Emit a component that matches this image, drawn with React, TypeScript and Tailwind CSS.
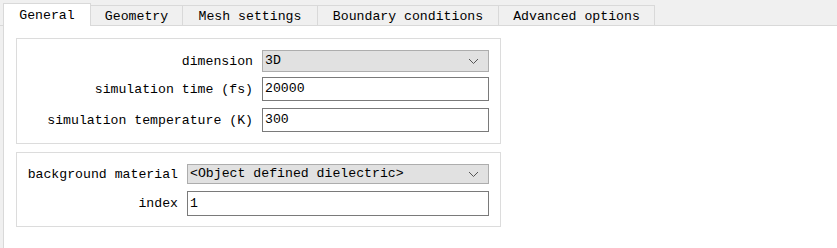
import React from "react";

const tabs = [
  { name: "General", w: "w-[88px]" },
  { name: "Geometry", w: "w-[92px]" },
  { name: "Mesh settings", w: "w-[135px]" },
  { name: "Boundary conditions", w: "w-[181px]" },
  { name: "Advanced options", w: "w-[156px]" },
];

const Chevron = () => (
  <svg width="11" height="7" viewBox="0 0 11 7" className="shrink-0">
    <path d="M1 1 L5.5 5.5 L10 1" fill="none" stroke="#555" strokeWidth="1" />
  </svg>
);

const Combo: React.FC<{ value: string; h: string }> = ({ value, h }) => (
  <div className={`${h} flex items-center justify-between bg-[#e1e1e1] border border-[#adadad] pl-[2px] pr-[9px]`}>
    <span>{value}</span>
    <Chevron />
  </div>
);

const Field: React.FC<{ value: string; h: string }> = ({ value, h }) => (
  <div className={`${h} flex items-center bg-white border border-[#7a7a7a] pl-[2px]`}>{value}</div>
);

const App: React.FC = () => {
  return (
    <div
      className="w-[837px] h-[248px] bg-[#f0f0f0] flex flex-col overflow-hidden text-[13.2px] text-black"
      style={{ fontFamily: '"Liberation Mono", "DejaVu Sans Mono", monospace' }}
    >
      {/* tab bar */}
      <div className="h-[26px] shrink-0 flex items-end pl-[3px] border-b border-[#d9d9d9]">
        {tabs.map((t, i) =>
          i === 0 ? (
            <div
              key={t.name}
              className={`${t.w} h-[23px] -mb-px bg-white border border-b-0 border-[#d9d9d9] flex items-center justify-center pt-[1px] relative z-10`}
            >
              {t.name}
            </div>
          ) : (
            <div
              key={t.name}
              className={`${t.w} h-[20px] border-t border-r border-[#d9d9d9] flex items-center justify-center pt-[2px]`}
            >
              {t.name}
            </div>
          )
        )}
      </div>

      {/* pane */}
      <div className="flex-1 ml-[3px] bg-white border-l border-[#d9d9d9] pl-[12px] pt-[12px] flex flex-col gap-[8px]">
        <div className="w-[485px] h-[106px] border border-[#dcdcdc] pt-[11px] pr-[11px] grid grid-cols-[1fr_227px] gap-x-[9px] content-start">
          <div className="h-[22px] flex items-center justify-end pt-[1px]">dimension</div>
          <Combo value="3D" h="h-[22px]" />
          <div className="h-[24px] mt-[5px] flex items-center justify-end pt-[1px]">simulation time (fs)</div>
          <div className="mt-[5px]">
            <Field value="20000" h="h-[24px]" />
          </div>
          <div className="h-[24px] mt-[7px] flex items-center justify-end pt-[1px]">simulation temperature (K)</div>
          <div className="mt-[7px]">
            <Field value="300" h="h-[24px]" />
          </div>
        </div>

        <div className="w-[485px] h-[75px] border border-[#dcdcdc] pt-[11px] pr-[11px] grid grid-cols-[1fr_302px] gap-x-[9px] content-start">
          <div className="h-[20px] flex items-center justify-end pt-[1px]">background material</div>
          <Combo value="<Object defined dielectric>" h="h-[20px]" />
          <div className="h-[25px] mt-[7px] flex items-center justify-end pt-[1px]">index</div>
          <div className="mt-[7px]">
            <Field value="1" h="h-[25px]" />
          </div>
        </div>
      </div>
    </div>
  );
};

export default App;
